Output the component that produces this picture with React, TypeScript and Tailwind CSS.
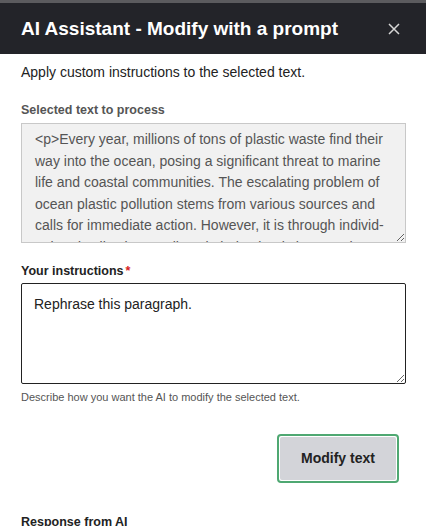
const selectedText =
  '<p>Every year, millions of tons of plastic waste find their way into the ocean, posing a significant threat to marine life and coastal communities. The escalating problem of ocean plastic pollution stems from various sources and calls for immediate action. However, it is through individ\u00ADual and collective small-scale behavioral changes that we can make a difference.</p>'

export default function App() {
  return (
    <div
      className="w-[426px] h-[526px] overflow-hidden bg-[#5b5b5e] pt-[3px]"
      style={{ fontFamily: '"Liberation Sans", Arial, sans-serif' }}
    >
      <div className="flex items-center justify-between h-[51px] bg-[#232429] pl-[21px] pr-[26px]">
        <h1 className="text-[19px] font-bold text-white leading-none">
          AI Assistant - Modify with a prompt
        </h1>
        <button className="text-[#d6d6d6] text-[20px] leading-none">
          <svg width="12" height="12" viewBox="0 0 12 12" fill="none">
            <path d="M1 1L11 11M11 1L1 11" stroke="currentColor" strokeWidth="1.5" />
          </svg>
        </button>
      </div>

      <div className="bg-white h-full px-[21px] pt-[8px]">
        <p className="text-[14px] text-[#222] leading-[20px]">
          Apply custom instructions to the selected text.
        </p>

        <div className="mt-[20px]">
          <label className="block text-[12.5px] font-bold text-[#555] leading-[16px] mb-[5px]">
            Selected text to process
          </label>
          <textarea
            readOnly
            value={selectedText}
            className="block w-[385px] h-[120px] bg-[#f1f1f1] border border-[#c8c8c8] text-[14px] text-[#555] leading-[21.5px] px-[13px] pt-[5px] pb-0 resize-y overflow-hidden"
            style={{ fontFamily: '"Liberation Sans", Arial, sans-serif', hyphens: 'manual' }}
            lang="en"
          />
        </div>

        <div className="mt-[20px]">
          <label className="block text-[12.5px] font-bold text-[#222] leading-[16px] mb-[4px]">
            Your instructions<span className="text-[#d72222] ml-[2px]">*</span>
          </label>
          <textarea
            defaultValue="Rephrase this paragraph."
            className="block w-[385px] h-[101px] border-[1.5px] border-[#222] rounded-[2px] text-[14px] text-[#222] leading-[20px] px-[12px] pt-[10px] resize-y outline-none"
            style={{ fontFamily: '"Liberation Sans", Arial, sans-serif' }}
          />
          <p className="text-[11px] text-[#555] leading-[14px] mt-[6px]">
            Describe how you want the AI to modify the selected text.
          </p>
        </div>

        <div className="flex justify-end mt-[30px] pr-[6px]">
          <button className="w-[122px] h-[49px] rounded-[4px] border-[2px] border-[#4fa872] p-[1px] bg-white">
            <span className="flex items-center justify-center w-full h-full rounded-[2px] bg-[#d3d4d9] text-[14px] font-bold text-[#222]">
              Modify text
            </span>
          </button>
        </div>

        <h2 className="text-[12.5px] font-bold text-[#222] leading-[16px] mt-[31px]">
          Response from AI
        </h2>
      </div>
    </div>
  )
}
